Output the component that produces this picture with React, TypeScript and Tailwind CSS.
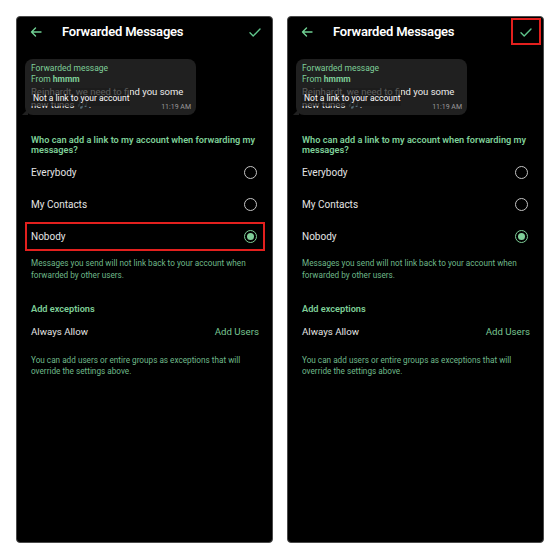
import React from "react";

const GREEN = "text-[#7fcf98]";
const MUTED = "text-[#6fb98a]";

function Radio({ on }: { on?: boolean }) {
  if (on) {
    return (
      <span className="w-[13px] h-[13px] rounded-full border-[1.5px] border-[#7fcf98] flex items-center justify-center">
        <span className="w-[7px] h-[7px] rounded-full bg-[#7fcf98]" />
      </span>
    );
  }
  return <span className="w-[13px] h-[13px] rounded-full border-[1.5px] border-[#c4c4c4]" />;
}

function Option({ label, on, boxed }: { label: string; on?: boolean; boxed?: boolean }) {
  return (
    <div className="relative h-[32px] flex items-center justify-between pl-[14px] pr-[15px]">
      <span className="text-[10px] text-[#e4e4e4]">{label}</span>
      <Radio on={on} />
      {boxed && (
        <div className="absolute top-[2px] bottom-[1px] left-[8px] right-[7px] border-2 border-[#e3201e]" />
      )}
    </div>
  );
}

function Panel({ mark }: { mark: "nobody" | "check" }) {
  return (
    <div className="w-[257px] h-[527px] bg-black rounded-[4px] border border-[#4a4a4a] overflow-hidden">
      {/* header */}
      <div className="h-[30px] flex items-center pl-[13px] pr-[11px]">
        <svg width="12" height="10" viewBox="0 0 12 10" fill="none" stroke="#6fcf92" strokeWidth="1.4" strokeLinecap="round" strokeLinejoin="round">
          <path d="M11 5H1.5M5.5 1 1.5 5l4 4" />
        </svg>
        <span className="ml-[20px] text-[13px] font-semibold text-white tracking-[-0.2px]">Forwarded Messages</span>
        <span className="ml-auto relative flex items-center">
          <svg width="12" height="9" viewBox="0 0 12 9" fill="none" stroke="#5ec38a" strokeWidth="1.4" strokeLinecap="round" strokeLinejoin="round">
            <path d="M1 4.8 4.2 8 11 1" />
          </svg>
          {mark === "check" && (
            <div className="absolute -left-[9px] -top-[10px] w-[30px] h-[27px] border-2 border-[#e3201e]" />
          )}
        </span>
      </div>

      {/* bubble */}
      <div className="relative mt-[12px] ml-[8px] w-[171px] h-[56px] bg-[#202020] rounded-[8px] pt-[4px] px-[6px]">
        <div className={`text-[8.5px] leading-[11px] ${GREEN}`}>Forwarded message</div>
        <div className={`text-[8.5px] leading-[11px] ${GREEN}`}>
          From <span className="font-bold">hmmm</span>
        </div>
        <div className="text-[9.5px] leading-[13px] text-[#ececec] whitespace-nowrap">
          <div>Reinhardt, we need to find you some</div>
          <div>new tunes 🎶.</div>
        </div>
        <span className="absolute right-[5px] bottom-[3px] text-[7px] text-[#9a9a9a]">11:19 AM</span>
        <div className="absolute left-[5px] top-[29px] w-[100px] h-[18px] bg-[#1b1b1b]/70 flex items-end pb-[3px] pl-[3px]">
          <span className="text-[8.5px] leading-[10px] text-white">Not a link to your account</span>
        </div>
        <div className="absolute -left-[3px] bottom-0 w-0 h-0 border-l-[6px] border-l-transparent border-b-[6px] border-b-[#202020]" />
      </div>

      {/* question */}
      <div className={`mt-[20px] px-[14px] text-[9.2px] leading-[10px] font-semibold ${GREEN} whitespace-nowrap`}>
        <div>Who can add a link to my account when forwarding my</div>
        <div>messages?</div>
      </div>

      <div className="mt-[1px]">
        <Option label="Everybody" />
        <Option label="My Contacts" />
        <Option label="Nobody" on boxed={mark === "nobody"} />
      </div>

      <div className={`mt-[5px] px-[14px] text-[8.2px] leading-[12px] ${MUTED} whitespace-nowrap`}>
        <div>Messages you send will not link back to your account when</div>
        <div>forwarded by other users.</div>
      </div>

      <div className={`mt-[22px] px-[14px] text-[9.2px] leading-[12px] font-semibold ${GREEN}`}>Add exceptions</div>

      <div className="mt-[7px] h-[20px] flex items-center justify-between pl-[14px] pr-[13px] text-[9.7px]">
        <span className="text-[#e4e4e4]">Always Allow</span>
        <span className="text-[#78c692]">Add Users</span>
      </div>

      <div className={`mt-[13px] px-[14px] text-[8.2px] leading-[11px] ${MUTED} whitespace-nowrap`}>
        <div>You can add users or entire groups as exceptions that will</div>
        <div>override the settings above.</div>
      </div>
    </div>
  );
}

export default function App() {
  return (
    <div className="w-[560px] h-[560px] bg-white pt-[16px] pl-[16px] flex gap-[14px]" style={{ fontFamily: "Roboto, 'Liberation Sans', sans-serif" }}>
      <Panel mark="nobody" />
      <Panel mark="check" />
    </div>
  );
}
